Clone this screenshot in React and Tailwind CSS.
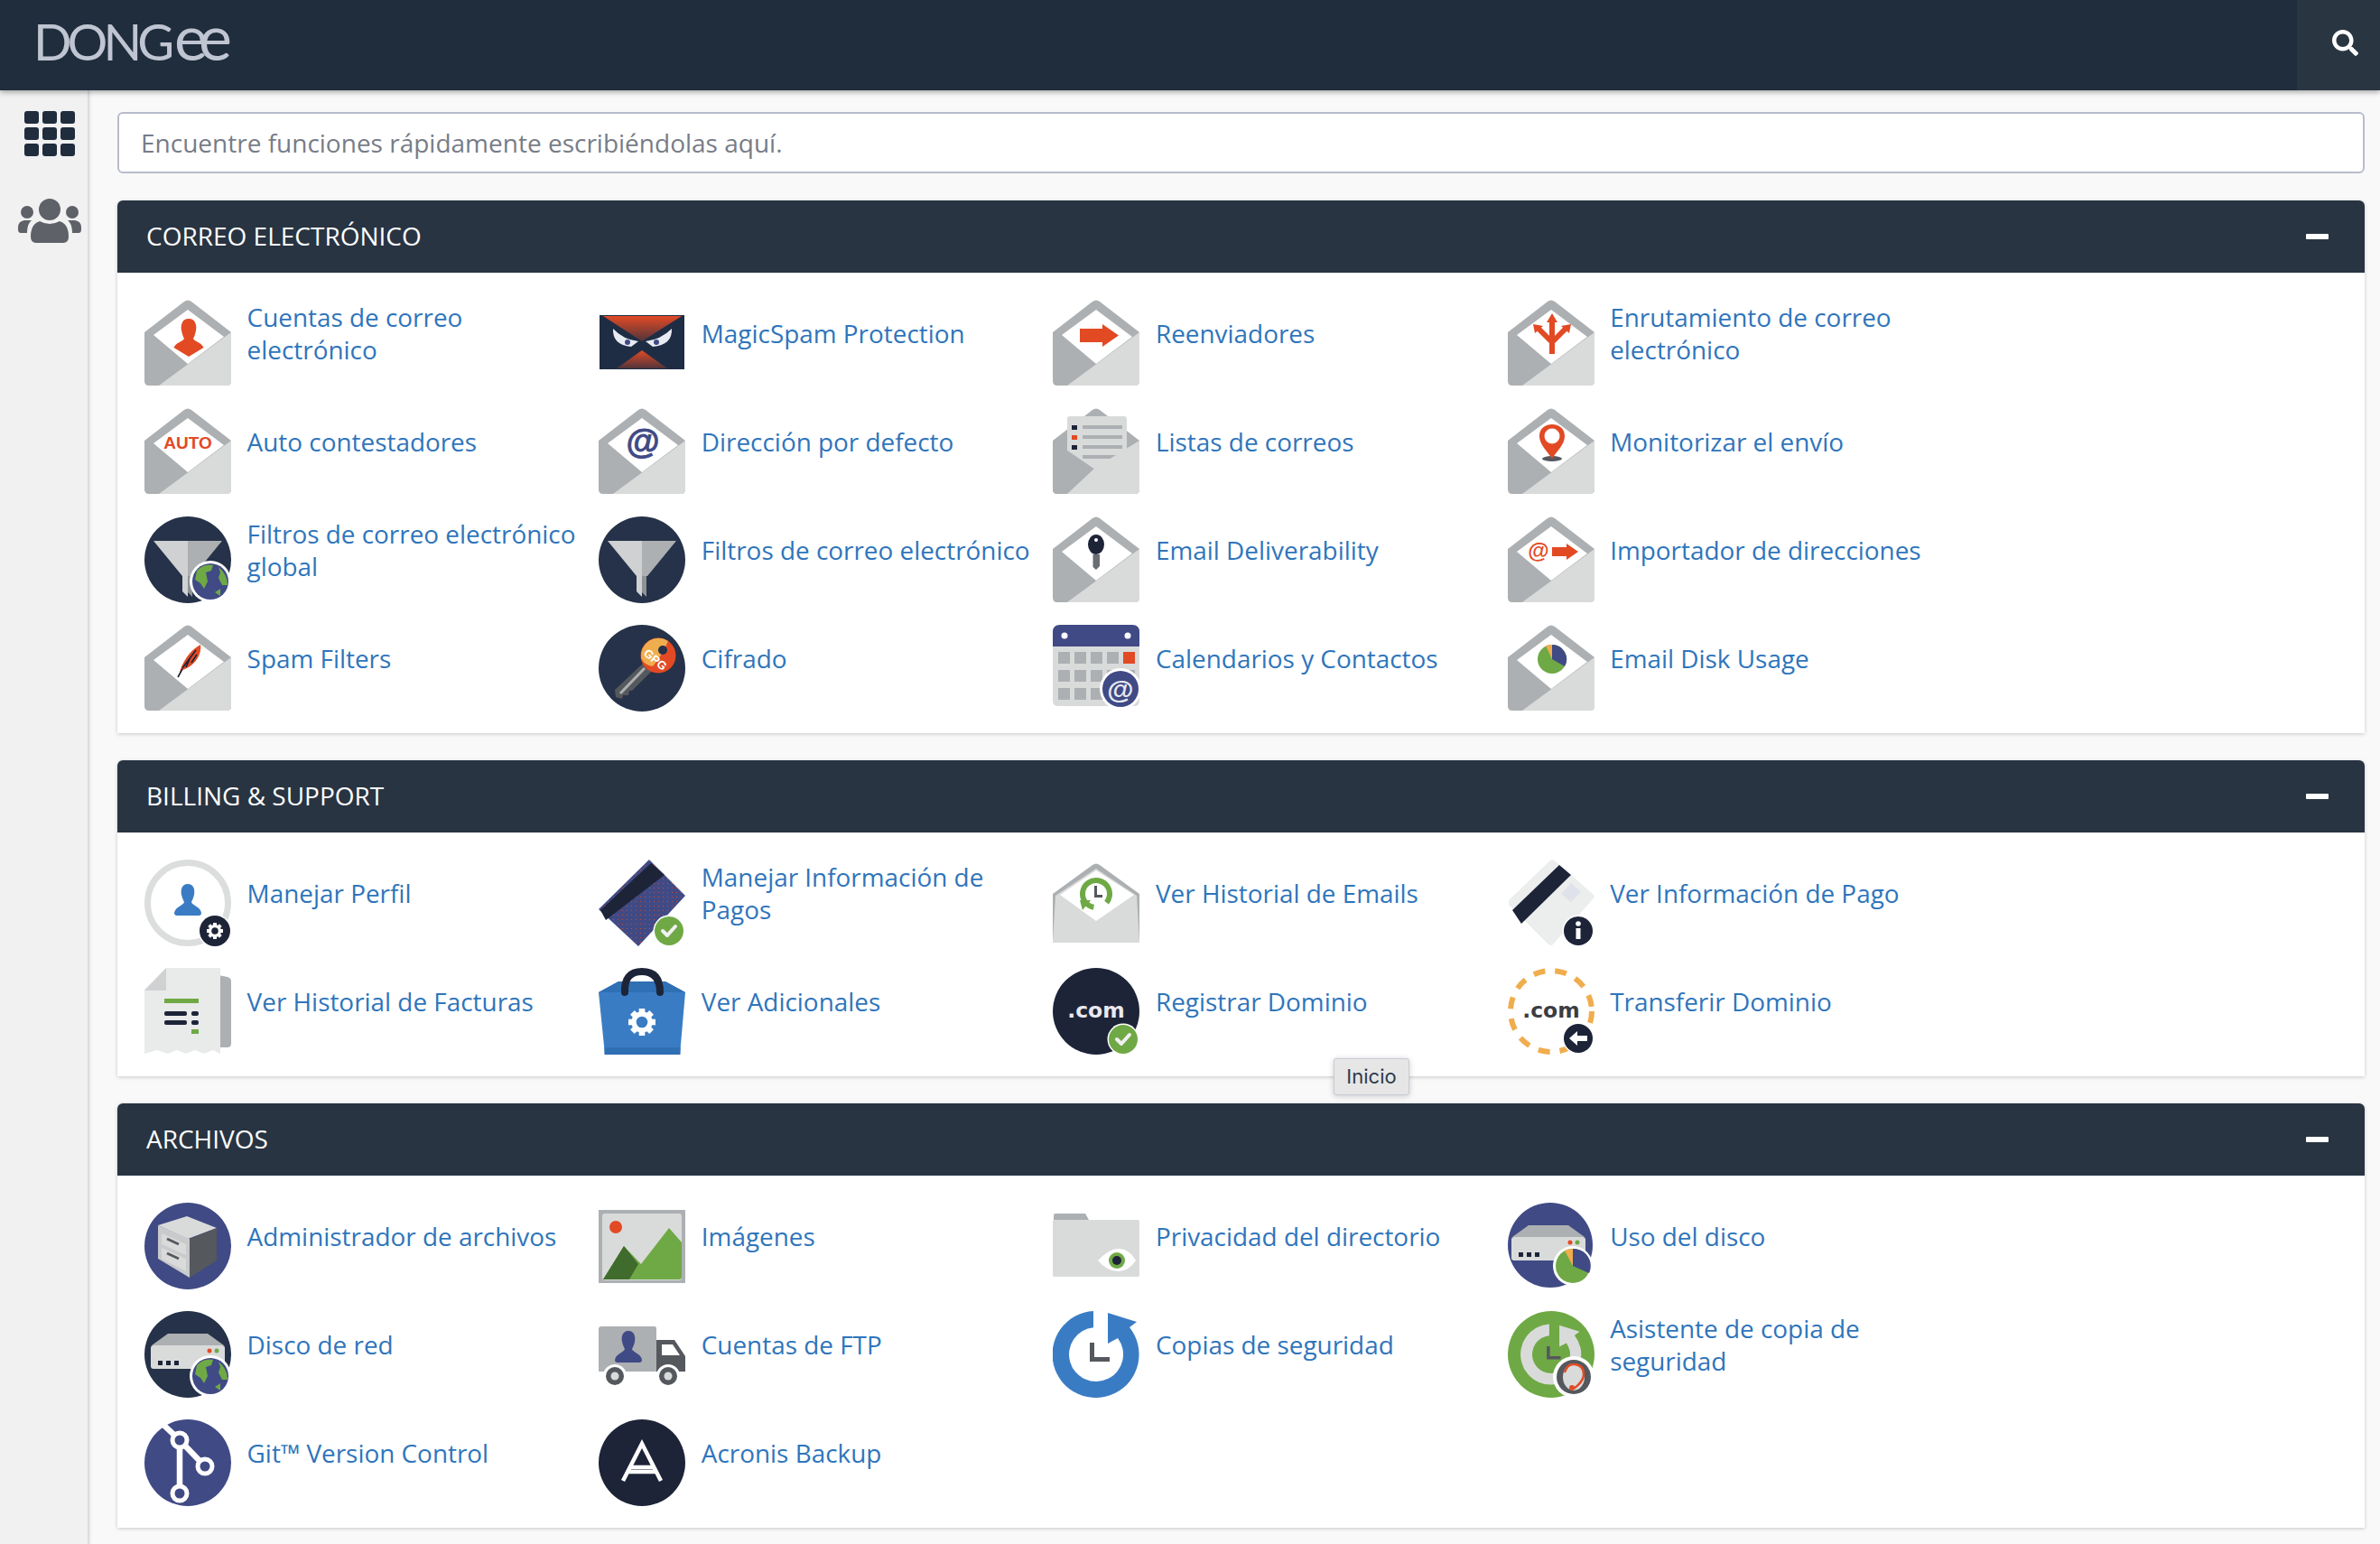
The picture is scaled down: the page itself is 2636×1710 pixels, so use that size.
import { FaSearch } from 'react-icons/fa';

// cPanel-style tool index. All the tool icons are drawn on a 96x96 box.

const DARK = '#253249';
const NAVY = '#1d2438';
const INDIGO = '#404a85';
const ORANGE = '#e24a24';
const GREEN = '#6fa945';
const BLUE = '#3a7cc4';
const GRAY = '#adb0b2';
const LIGHT = '#d9dbdb';

function Box({ children }) {
  return (
    <svg viewBox="0 0 96 96" className="w-[96px] h-[96px] shrink-0">
      {children}
    </svg>
  );
}

function Envelope({ children }) {
  return (
    <Box>
      <path d="M44 2 Q48 -1 52 2 L96 36 V90 Q96 95 91 95 H5 Q0 95 0 90 V36 Z" fill={GRAY} />
      <path d="M48 11 L88 41 L48 71 L10 39 Z" fill="#fff" />
      {children}
      <path d="M96 36 V90 Q96 95 91 95 H16 Z" fill={LIGHT} />
    </Box>
  );
}

function Disc({ color, children }) {
  return (
    <Box>
      <circle cx="48" cy="48" r="48" fill={color} />
      {children}
    </Box>
  );
}

function Person({ x, y }) {
  return (
    <path
      transform={`translate(${x} ${y})`}
      d="M0 -21 C-8 -21 -9 -13 -8 -8 C-7 -3 -6 -1 -5 1 C-6 4 -14 5 -16.5 11 L0 21 L16.5 11 C14 5 6 4 5 1 C6 -1 7 -3 8 -8 C9 -13 8 -21 0 -21 Z"
      fill={ORANGE}
    />
  );
}

function Bust({ x, y, color }) {
  return (
    <path
      transform={`translate(${x} ${y})`}
      d="M0 -18 C-7 -18 -8 -11 -7 -6 C-6 -2 -5 0 -4 2 C-5 6 -14 7 -15 14 Q-15 17 -12 17 H12 Q15 17 15 14 C14 7 5 6 4 2 C5 0 6 -2 7 -6 C8 -11 7 -18 0 -18 Z"
      fill={color}
    />
  );
}

function Badge({ color = NAVY, r = 16, cx = 78, cy = 79, children }) {
  return (
    <g>
      <circle cx={cx} cy={cy} r={r + 1.5} fill="#fff" />
      <circle cx={cx} cy={cy} r={r} fill={color} />
      {children}
    </g>
  );
}

function Gear({ cx, cy, r, hole }) {
  const teeth = [0, 45, 90, 135];
  return (
    <g>
      {teeth.map((a) => (
        <rect
          key={a}
          x={cx - r * 0.22}
          y={cy - r}
          width={r * 0.44}
          height={r * 2}
          fill="#fff"
          transform={`rotate(${a} ${cx} ${cy})`}
        />
      ))}
      <circle cx={cx} cy={cy} r={r * 0.78} fill="#fff" />
      <circle cx={cx} cy={cy} r={r * 0.42} fill={hole} />
    </g>
  );
}

function Check({ cx = 78, cy = 79 }) {
  return (
    <Badge color={GREEN} cx={cx} cy={cy}>
      <path
        d={`M${cx - 7} ${cy} l5 5 l9 -10`}
        fill="none"
        stroke="#f1f1f1"
        strokeWidth="4"
        strokeLinecap="round"
        strokeLinejoin="round"
      />
    </Badge>
  );
}

function Globe() {
  return (
    <g>
      <circle cx="73" cy="72" r="23" fill="#fff" />
      <circle cx="73" cy="72" r="20" fill={INDIGO} />
      <path d="M58 60 Q66 52 76 54 L74 60 L68 62 L70 72 L66 80 L62 74 L56 70 Z" fill={GREEN} />
      <path d="M82 56 Q92 64 92 76 L86 76 L82 68 L84 62 Z M78 84 L84 80 L84 88 Z" fill={GREEN} />
    </g>
  );
}

function Funnel() {
  return (
    <g>
      <path d="M10 27 H48 V89 L42 83 V66 Z" fill="#cfd1d2" />
      <path d="M48 27 H86 L54 66 H48 Z" fill={GRAY} />
      <path d="M48 66 H53 V89 L48 84 Z" fill="#8f9294" />
    </g>
  );
}

function Server() {
  return (
    <g>
      <path d="M8 38 L26 25 H70 L88 38 Z" fill={GRAY} />
      <rect x="7" y="38" width="82" height="26" rx="3" fill={LIGHT} />
      <rect x="15" y="55" width="5" height="5" fill={NAVY} />
      <rect x="24" y="55" width="5" height="5" fill={NAVY} />
      <rect x="33" y="55" width="5" height="5" fill={NAVY} />
      <circle cx="72" cy="44" r="2.5" fill={ORANGE} />
      <circle cx="80" cy="44" r="2.5" fill={GREEN} />
    </g>
  );
}

function DotCom({ color }) {
  return (
    <text
      x="48"
      y="55"
      textAnchor="middle"
      fontFamily="'DejaVu Sans', sans-serif"
      fontWeight="700"
      fontSize="23.5"
      fill={color}
    >
      .com
    </text>
  );
}

function BackupRing({ color }) {
  return (
    <g>
      <path d="M45 0.1 V18.2 A30 30 0 1 0 72 30 L61 36 V2 L93 12 L85 18 A48 48 0 1 1 45 0.1 Z" fill={color} />
      <path d="M41 35 H46 V51 H63 V56 H41 Z" fill="#55585d" />
    </g>
  );
}

const ICONS = {
  account: (
    <Envelope>
      <Person x={49} y={42} />
    </Envelope>
  ),
  magicspam: (
    <Box>
      <rect x="1" y="17" width="94" height="60" fill="#1f2d44" />
      <defs>
        <linearGradient id="spamfade" x1="0" y1="0" x2="0" y2="1">
          <stop offset="0" stopColor={ORANGE} />
          <stop offset="1" stopColor={ORANGE} stopOpacity="0.25" />
        </linearGradient>
      </defs>
      <path d="M5 18 H92 L48 46 Z" fill="url(#spamfade)" />
      <path d="M16 32 Q15 50 36 52 L44 46 Q27 44 16 32 Z" fill="#e8ecf2" />
      <path d="M81 32 Q82 50 60 52 L52 46 Q69 44 81 32 Z" fill="#e8ecf2" />
      <circle cx="32" cy="47" r="3" fill={INDIGO} />
      <circle cx="64" cy="47" r="3" fill={INDIGO} />
      <path d="M20 76 L48 56 L76 76 Z" fill="url(#spamfade)" />
    </Box>
  ),
  forward: (
    <Envelope>
      <path d="M30 32 H55 V27 L73 39.5 L55 52 V47 H30 Z" fill={ORANGE} />
    </Envelope>
  ),
  routing: (
    <Envelope>
      <path d="M49 60 V22 M49 47 L34 32 M49 47 L64 32" fill="none" stroke={ORANGE} strokeWidth="6" />
      <path d="M49 15 L43 25 H55 Z M28 27 L39 29 L30 37 Z M70 27 L59 29 L68 37 Z" fill={ORANGE} />
    </Envelope>
  ),
  auto: (
    <Envelope>
      <text x="48" y="45" textAnchor="middle" fontFamily="'Liberation Sans', sans-serif" fontWeight="700" fontSize="19" fill={ORANGE}>
        AUTO
      </text>
    </Envelope>
  ),
  at: (
    <Envelope>
      <text x="49" y="50" textAnchor="middle" fontFamily="'Liberation Sans', sans-serif" fontWeight="700" fontSize="38" fill={INDIGO} stroke={INDIGO} strokeWidth="0.8">
        @
      </text>
    </Envelope>
  ),
  lists: (
    <Box>
      <path d="M44 2 Q48 -1 52 2 L96 36 V90 Q96 95 91 95 H5 Q0 95 0 90 V36 Z" fill={GRAY} />
      <rect x="16" y="9" width="66" height="70" rx="3" fill={LIGHT} />
      <rect x="21" y="19" width="6" height="5" fill={NAVY} />
      <rect x="21" y="30" width="6" height="5" fill={ORANGE} />
      <rect x="21" y="41" width="6" height="5" fill={NAVY} />
      <rect x="33" y="19" width="44" height="4" fill={GRAY} />
      <rect x="33" y="30" width="44" height="4" fill={GRAY} />
      <rect x="33" y="41" width="44" height="4" fill={GRAY} />
      <rect x="33" y="52" width="38" height="4" fill={GRAY} />
      <path d="M0 36 L47 68 L16 95 H5 Q0 95 0 90 Z" fill={GRAY} />
      <path d="M96 36 V90 Q96 95 91 95 H16 L47 66 Z" fill={LIGHT} />
    </Box>
  ),
  pin: (
    <Envelope>
      <ellipse cx="49" cy="56" rx="11" ry="3" fill="#55585d" />
      <path d="M49 56 C43 47 35 40 35 31 C35 23 41 18 49 18 C57 18 63 23 63 31 C63 40 55 47 49 56 Z" fill={ORANGE} />
      <circle cx="49" cy="31" r="8.5" fill="#fff" />
    </Envelope>
  ),
  filterGlobal: (
    <Disc color={DARK}>
      <Funnel />
      <Globe />
    </Disc>
  ),
  filter: (
    <Disc color={DARK}>
      <Funnel />
    </Disc>
  ),
  key: (
    <Envelope>
      <ellipse cx="48" cy="31" rx="9" ry="11" fill={NAVY} />
      <circle cx="48" cy="26" r="2" fill="#fff" />
      <path d="M44.5 42 H52 V55 L48 59 L44.5 56 Z" fill="#6a6d72" />
    </Envelope>
  ),
  importer: (
    <Envelope>
      <text x="34" y="46" textAnchor="middle" fontFamily="'Liberation Sans', sans-serif" fontWeight="700" fontSize="24" fill={ORANGE}>
        @
      </text>
      <path d="M49 34 H65 V30 L78 39 L65 48 V44 H49 Z" fill={ORANGE} />
    </Envelope>
  ),
  spam: (
    <Envelope>
      <path d="M39 53 C41 43 50 28 62 22 C64 32 56 46 42 50 Z" fill={ORANGE} />
      <path d="M42 48 L57 28 M46 47 L50 38 M52 42 L58 33 M37 58 L42 49" stroke={NAVY} strokeWidth="1.6" fill="none" />
    </Envelope>
  ),
  gpg: (
    <Disc color={DARK}>
      <path d="M19 80 L18 72 L50 42 L60 50 L37 73 L34 73 L33 78 L27 78 L26 82 Z" fill="#55585d" />
      <path d="M24 76 L51 48" stroke={GRAY} strokeWidth="3" />
      <circle cx="66" cy="34" r="19.5" fill={ORANGE} />
      <path d="M47 37 A19.5 19.5 0 0 1 77 18 Q70 34 60 46 Q51 45 47 37 Z" fill="#f0ad4e" />
      <circle cx="71" cy="28" r="5" fill={DARK} />
      <text x="60" y="42" transform="rotate(40 60 42)" textAnchor="middle" fontFamily="'Liberation Sans', sans-serif" fontWeight="700" fontSize="13" fill="#fff">
        GPG
      </text>
    </Disc>
  ),
  calendar: (
    <Box>
      <path d="M0 24 V8 Q0 0 8 0 H88 Q96 0 96 8 V24 Z" fill={INDIGO} />
      <circle cx="13" cy="12" r="3.5" fill="#fff" />
      <circle cx="83" cy="12" r="3.5" fill="#fff" />
      <path d="M0 24 H96 V84 Q96 90 90 90 H6 Q0 90 0 84 Z" fill={LIGHT} />
      {[0, 1, 2].map((r) =>
        [0, 1, 2, 3, 4].map((c) => (
          <rect
            key={`${r}-${c}`}
            x={6 + c * 18}
            y={30 + r * 20}
            width="13"
            height="13"
            fill={r === 0 && c === 4 ? ORANGE : GRAY}
          />
        ))
      )}
      <circle cx="75" cy="71" r="23" fill="#fff" />
      <circle cx="75" cy="71" r="20" fill={INDIGO} />
      <text x="75" y="82" textAnchor="middle" fontFamily="'Liberation Sans', sans-serif" fontWeight="700" fontSize="30" fill="#e8e9f0">
        @
      </text>
    </Box>
  ),
  diskmail: (
    <Envelope>
      <circle cx="49" cy="38" r="16" fill={GREEN} />
      <path d="M49 38 V22 A16 16 0 0 1 63 46 Z" fill={INDIGO} />
      <path d="M49 38 L42 23 Q45 22 49 22 Z" fill="#f0ad4e" />
    </Envelope>
  ),
  profile: (
    <Box>
      <circle cx="48" cy="48" r="44.5" fill="none" stroke="#dcdede" strokeWidth="7" />
      <Bust x={48} y={45} color={BLUE} />
      <Badge r={17} cx={78} cy={79}>
        <Gear cx={78} cy={79} r={9} hole={NAVY} />
      </Badge>
    </Box>
  ),
  payment: (
    <Box>
      <defs>
        <pattern id="carddots" width="5" height="5" patternUnits="userSpaceOnUse">
          <circle cx="1.5" cy="1.5" r="0.6" fill={ORANGE} />
        </pattern>
      </defs>
      <path d="M0 55 L56 0 L96 40 L44 96 Z" fill={INDIGO} />
      <path d="M0 55 L56 0 L96 40 L44 96 Z" fill="url(#carddots)" />
      <path d="M2 56 L58 4 L73 17 L8 67 Z" fill={NAVY} />
      <Check />
    </Box>
  ),
  history: (
    <Box>
      <path d="M44 6 Q48 3 52 6 L96 38 V86 Q96 92 90 92 H6 Q0 92 0 86 V38 Z" fill={GRAY} />
      <path d="M3 40 L48 10 L93 40 L96 92 H0 Z" fill={LIGHT} />
      <path d="M48 12 L90 39 L48 68 L8 39 Z" fill="#fff" />
      <circle cx="48" cy="38" r="15" fill="none" stroke={GREEN} strokeWidth="6" strokeDasharray="78 16" transform="rotate(100 48 38)" />
      <path d="M30 45 L42 45 L33 56 Z" fill={GREEN} />
      <path d="M46 29 V42 H55 V39 H49 V29 Z" fill="#55585d" />
    </Box>
  ),
  payinfo: (
    <Box>
      <path d="M1 45 L47 1 Q50 -1 53 2 L94 38 Q97 41 94 44 L50 94 Q48 96 45 94 L1 50 Z" fill="#eceded" />
      <path d="M5 56 L57 6 L70 17 L15 71 Z" fill={NAVY} />
      <path d="M59 38 L70 26 L81 36 L70 47 Z" fill="#dfe2ea" />
      <Badge>
        <circle cx="78" cy="71" r="2.8" fill="#fff" />
        <rect x="75.5" y="76" width="5" height="12" fill="#fff" />
      </Badge>
    </Box>
  ),
  invoice: (
    <Box>
      <path d="M82 8 L92 10 Q96 11 96 15 V84 Q96 88 92 88 H82 Z" fill={GRAY} />
      <path d="M24 0 H84 V95 L76 91 L66 95 L56 91 L46 95 L36 91 L26 95 L14 91 L0 95 V24 Z" fill="#e9eaea" />
      <path d="M24 0 V25 H0 Z" fill="#cfd1d2" />
      <rect x="22" y="34" width="38" height="5" fill={GREEN} />
      <rect x="22" y="48" width="25" height="5" rx="2" fill={NAVY} />
      <rect x="52" y="48" width="8" height="5" rx="2" fill={NAVY} />
      <rect x="22" y="58" width="25" height="5" rx="2" fill={NAVY} />
      <rect x="52" y="58" width="8" height="5" rx="2" fill={NAVY} />
      <rect x="52" y="68" width="8" height="5" fill={GREEN} />
    </Box>
  ),
  addons: (
    <Box>
      <path d="M0 27 L22 15 H74 L96 27 L90 96 H7 Z" fill={BLUE} />
      <path d="M0 27 L22 15 H74 L96 27 Z" fill="#2f6fb4" />
      <rect x="6.5" y="88" width="84" height="8" fill="#2f6fb4" />
      <path d="M29 27 Q28 4 48 4 Q68 4 68 27" fill="none" stroke={NAVY} strokeWidth="8" strokeLinecap="round" />
      <Gear cx={48} cy={60} r={15} hole={BLUE} />
    </Box>
  ),
  register: (
    <Disc color={NAVY}>
      <DotCom color="#e8e9f0" />
      <Check />
    </Disc>
  ),
  transfer: (
    <Box>
      <circle cx="48" cy="48" r="45" fill="none" stroke="#f0ad4e" strokeWidth="6" strokeDasharray="13 11" />
      <DotCom color="#3a3d44" />
      <Badge cy={78}>
        <path d="M68 78 L77 70 V75 H88 V81 H77 V86 Z" fill="#fff" />
      </Badge>
    </Box>
  ),
  files: (
    <Disc color={INDIGO}>
      <path d="M15 25 L47 15 L80 28 L48 40 Z" fill={LIGHT} />
      <path d="M15 25 L50 40 V83 L15 62 Z" fill="#c8cacb" />
      <path d="M50 40 L80 28 V64 L50 83 Z" fill="#55585d" />
      <path d="M19 34 L46 46 V58 L19 46 Z M19 50 L46 62 V76 L19 62 Z" fill={LIGHT} />
      <path d="M25 40 L38 46 M25 56 L38 62" stroke="#55585d" strokeWidth="3" />
    </Disc>
  ),
  images: (
    <Box>
      <rect x="0" y="8" width="96" height="81" fill={GRAY} />
      <rect x="4" y="12" width="88" height="74" rx="3" fill={LIGHT} />
      <circle cx="19" cy="27" r="7" fill={ORANGE} />
      <path d="M5 85 L28 48 L47 68 L78 28 L92 44 V82 Q92 85 89 85 Z" fill={GREEN} />
      <path d="M5 85 L28 48 L44 68 L34 85 Z" fill="#3f6b2c" />
    </Box>
  ),
  privacy: (
    <Box>
      <path d="M1 19 V14 Q1 12 3 12 H36 L40 19 Z" fill={GRAY} />
      <rect x="0" y="19" width="96" height="63" rx="2" fill={LIGHT} />
      <path d="M50 64 Q62 51 73 51 Q85 51 92 64 Q85 75 73 76 Q60 76 50 64 Z" fill="#fff" />
      <circle cx="71" cy="64" r="9" fill={GREEN} />
      <circle cx="71" cy="64" r="5" fill={NAVY} />
    </Box>
  ),
  disk: (
    <Box>
      <ellipse cx="47" cy="47" rx="47" ry="47" fill={INDIGO} />
      <g transform="translate(-3 0)">
        <Server />
      </g>
      <circle cx="72" cy="70" r="22" fill="#fff" />
      <circle cx="72" cy="70" r="19" fill={GREEN} />
      <path d="M72 70 V51 A19 19 0 0 1 90 78 Z" fill={INDIGO} />
      <path d="M72 70 L63 53 Q67 51 72 51 Z" fill="#f0ad4e" />
    </Box>
  ),
  netdisk: (
    <Disc color={DARK}>
      <Server />
      <Globe />
    </Disc>
  ),
  ftp: (
    <Box>
      <path d="M0 20 Q0 17 3 17 H62 Q64 17 64 20 V67 H0 Z" fill={GRAY} />
      <path d="M64 32 H84 L96 50 V67 H64 Z" fill="#55585d" />
      <path d="M70 37 H82 L90 49 H70 Z" fill="#fff" />
      <Bust x={33} y={40} color={INDIGO} />
      <circle cx="18" cy="72" r="13" fill="#fff" />
      <circle cx="18" cy="72" r="10" fill="#55585d" />
      <circle cx="18" cy="72" r="4.5" fill={LIGHT} />
      <circle cx="77" cy="72" r="13" fill="#fff" />
      <circle cx="77" cy="72" r="10" fill="#55585d" />
      <circle cx="77" cy="72" r="4.5" fill={LIGHT} />
    </Box>
  ),
  backup: (
    <Box>
      <BackupRing color={BLUE} />
    </Box>
  ),
  wizard: (
    <Disc color={GREEN}>
      <g transform="translate(14.4 14.4) scale(0.7)">
        <BackupRing color={LIGHT} />
      </g>
      <circle cx="73" cy="73" r="23" fill="#fff" />
      <circle cx="73" cy="73" r="19" fill="#55585d" />
      <ellipse cx="73" cy="73" rx="12" ry="15" fill={LIGHT} />
      <path d="M63 68 Q66 58 74 59 Q84 60 84 70 Q84 78 73 86" fill="none" stroke={ORANGE} strokeWidth="2.5" />
      <circle cx="71" cy="85" r="3" fill={ORANGE} />
    </Disc>
  ),
  git: (
    <Disc color={INDIGO}>
      <path d="M20 5 L39 23 V82 M39 23 L67 52" stroke="#fff" strokeWidth="6.5" fill="none" />
      <circle cx="39" cy="23" r="8" fill={INDIGO} stroke="#fff" strokeWidth="5" />
      <circle cx="67" cy="52" r="8" fill={INDIGO} stroke="#fff" strokeWidth="5" />
      <circle cx="39" cy="82" r="8" fill={INDIGO} stroke="#fff" strokeWidth="5" />
    </Disc>
  ),
  acronis: (
    <Disc color={NAVY}>
      <path d="M27 68 L48 27 L69 68 M36 53 H60 M33 58 H63" fill="none" stroke="#fff" strokeWidth="4.5" />
    </Disc>
  ),
};

const SECTIONS = [
  {
    title: 'CORREO ELECTRÓNICO',
    items: [
      ['account', 'Cuentas de correo electrónico'],
      ['magicspam', 'MagicSpam Protection'],
      ['forward', 'Reenviadores'],
      ['routing', 'Enrutamiento de correo electrónico'],
      ['auto', 'Auto contestadores'],
      ['at', 'Dirección por defecto'],
      ['lists', 'Listas de correos'],
      ['pin', 'Monitorizar el envío'],
      ['filterGlobal', 'Filtros de correo electrónico global'],
      ['filter', 'Filtros de correo electrónico'],
      ['key', 'Email Deliverability'],
      ['importer', 'Importador de direcciones'],
      ['spam', 'Spam Filters'],
      ['gpg', 'Cifrado'],
      ['calendar', 'Calendarios y Contactos'],
      ['diskmail', 'Email Disk Usage'],
    ],
  },
  {
    title: 'BILLING & SUPPORT',
    items: [
      ['profile', 'Manejar Perfil'],
      ['payment', 'Manejar Información de Pagos'],
      ['history', 'Ver Historial de Emails'],
      ['payinfo', 'Ver Información de Pago'],
      ['invoice', 'Ver Historial de Facturas'],
      ['addons', 'Ver Adicionales'],
      ['register', 'Registrar Dominio'],
      ['transfer', 'Transferir Dominio'],
    ],
  },
  {
    title: 'ARCHIVOS',
    items: [
      ['files', 'Administrador de archivos'],
      ['images', 'Imágenes'],
      ['privacy', 'Privacidad del directorio'],
      ['disk', 'Uso del disco'],
      ['netdisk', 'Disco de red'],
      ['ftp', 'Cuentas de FTP'],
      ['backup', 'Copias de seguridad'],
      ['wizard', 'Asistente de copia de seguridad'],
      ['git', 'Git™ Version Control'],
      ['acronis', 'Acronis Backup'],
    ],
  },
];

function GridIcon() {
  const cells = Array.from({ length: 9 });
  return (
    <div className="grid grid-cols-3 gap-[4px] w-[56px]">
      {cells.map((_, i) => (
        <span key={i} className="h-[14px] rounded-[3px] bg-[#1f2d3d]" />
      ))}
    </div>
  );
}

function UsersIcon() {
  return (
    <svg viewBox="0 0 70 50" className="w-[70px] h-[50px]" fill="#5e6168">
      <circle cx="35" cy="12" r="12" />
      <circle cx="10" cy="15" r="7" />
      <circle cx="60" cy="15" r="7" />
      <path d="M14 42 Q14 28 24 25 Q35 31 46 25 Q56 28 56 42 Q56 49 50 49 H20 Q14 49 14 42 Z" />
      <path d="M0 32 Q0 25 7 24 Q11 24 15 24 Q10 28 10 38 H3 Q0 38 0 34 Z" />
      <path d="M70 32 Q70 25 63 24 Q59 24 55 24 Q60 28 60 38 H67 Q70 38 70 34 Z" />
    </svg>
  );
}

function Logo() {
  return (
    <div className="flex items-baseline pl-[37px] pb-[20px] text-[#c0c5d2] font-['Lato',sans-serif]">
      <span className="pr-[5px] text-[56px] leading-none font-normal tracking-[-5px]">DONG</span>
      <span className="pr-[10px] text-[70px] leading-none font-normal tracking-[-10px]">ee</span>
    </div>
  );
}

function Tool({ icon, label }) {
  return (
    <a href="#" className="flex items-center gap-[17.6px] h-[96px] mb-[24px] no-underline">
      {ICONS[icon]}
      <span className="w-[370px] pb-[22px] text-[27.9px] leading-[36px] text-[#2f75bb]">{label}</span>
    </a>
  );
}

function Section({ title, items }) {
  return (
    <section className="mb-[30px] rounded-t-[6px] bg-white shadow-[0_1px_4px_rgba(0,0,0,0.2)]">
      <div className="flex items-center justify-between h-[80px] pl-[32px] pr-[40px] rounded-t-[6px] bg-[#283442] text-white">
        <h2 className="pb-[2px] text-[28px] font-normal">{title}</h2>
        <span className="block w-[25px] h-[6px] rounded-[1px] bg-white" />
      </div>
      <div className="grid grid-cols-[repeat(4,503.2px)] pt-[30px] pl-[30px]">
        {items.map(([icon, label]) => (
          <Tool key={label} icon={icon} label={label} />
        ))}
      </div>
    </section>
  );
}

export default function App() {
  return (
    <div className="relative w-[2636px] h-[1710px] overflow-hidden flex flex-col bg-[#f9f9f9] font-['Open_Sans',sans-serif]">
      <header className="relative z-10 flex items-center justify-between h-[100px] shrink-0 bg-[#1f2d3d] shadow-[0_2px_6px_rgba(0,0,0,0.35)]">
        <Logo />
        <button className="flex items-center justify-center w-[92px] h-[100px] pl-[14px] pb-[6px] bg-[#2a3542] text-white">
          <FaSearch size={29} />
        </button>
      </header>
      <div className="flex flex-1 min-h-0">
        <aside className="flex flex-col items-center shrink-0 w-[99px] pt-[23px] pl-[12px] gap-[47px] bg-[#f1f1f1] border-r-2 border-[#dcdde2] shadow-[1px_0_3px_rgba(0,0,0,0.08)]">
          <GridIcon />
          <UsersIcon />
        </aside>
        <main className="flex-1 min-w-0 pt-[24px] pl-[31px] pr-[17px]">
          <input
            placeholder="Encuentre funciones rápidamente escribiéndolas aquí."
            className="block w-full h-[68px] px-[24px] mb-[30px] rounded-[6px] border-2 border-[#b8bccb] bg-white text-[28px] placeholder:text-[#777c87] outline-none"
          />
          {SECTIONS.map((s) => (
            <Section key={s.title} title={s.title} items={s.items} />
          ))}
        </main>
      </div>
      <div className="absolute left-[1477px] top-[1172px] flex items-center justify-center w-[84px] h-[41px] rounded-[3px] border border-[#c9ccd6] bg-[#e6e6e6] text-[22px] text-[#2d3a4a] font-['Inter',sans-serif] shadow-[0_1px_6px_rgba(0,0,0,0.2)]">
        Inicio
      </div>
    </div>
  );
}
